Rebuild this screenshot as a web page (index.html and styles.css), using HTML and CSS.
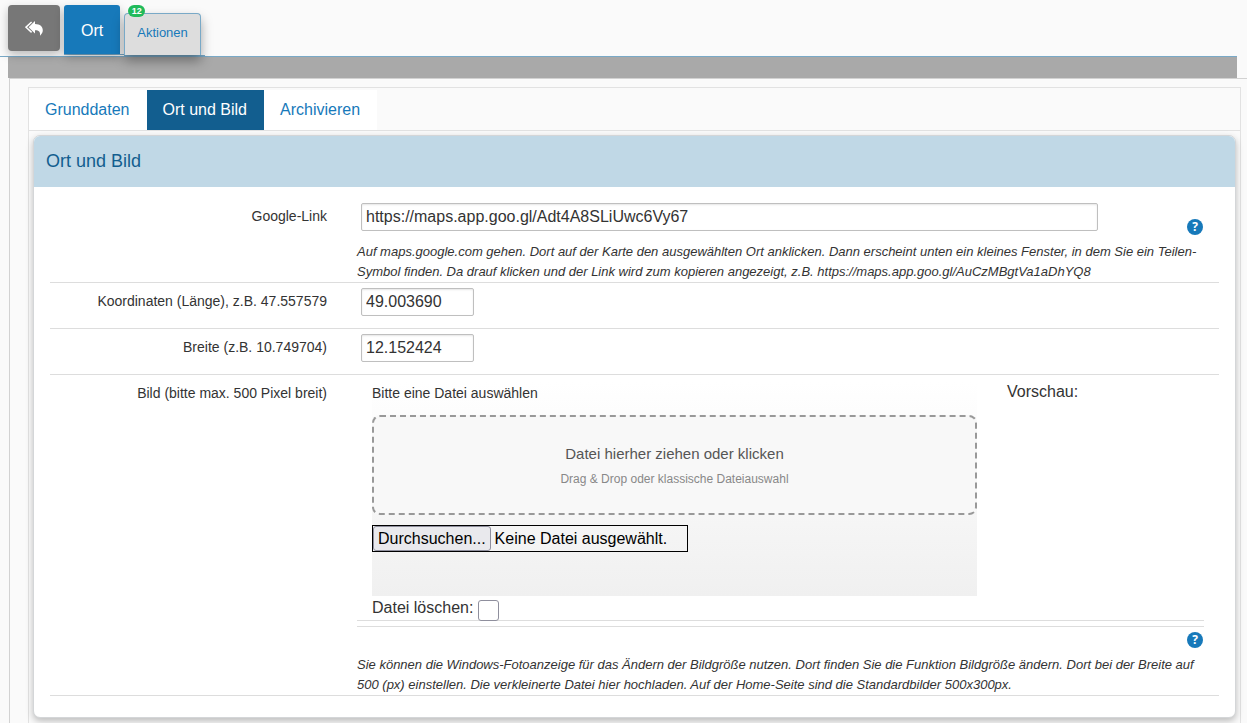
FILE: index.html
```html
<!DOCTYPE html>
<html lang="de">
<head>
<meta charset="utf-8">
<title>Ort und Bild</title>
<link rel="stylesheet" href="styles.css">
</head>
<body>
<nav class="topnav">
  <button type="button" class="back" aria-label="Zurück">
    <svg viewBox="0 0 18 15" width="18" height="15" aria-hidden="true">
      <path d="M6.600 1 1 6.200l5.600 5.200" fill="none" stroke="#fff" stroke-width="1.500"/>
      <path d="M10 0v3.100c5.200.1 7.800 2.600 7.800 6.200 0 2.400-1.300 4-2.800 5.400.5-3.900-.9-5.300-5-5.400v3.300L3.600 6.200z" fill="#fff"/>
    </svg>
  </button>
  <div class="topnav-item"><a class="main-tab" href="#ort">Ort</a></div>
  <div class="topnav-item topnav-item-actions"><a class="actions-tab" href="#aktionen">Aktionen<span class="badge">12</span></a></div>
</nav>
<div class="bar"></div>
<main class="page">
  <div class="tabbox">
    <nav class="tabs">
      <a class="tab" href="#grunddaten">Grunddaten</a>
      <a class="tab tab-active" href="#bild" aria-current="page">Ort und Bild</a>
      <a class="tab" href="#archivieren">Archivieren</a>
    </nav>
    <form class="card">
      <h1 class="card-title">Ort und Bild</h1>
      <div class="card-body">
        <div class="row row-link">
          <label class="label" for="link">Google-Link</label>
          <div class="field">
            <div class="link-line">
              <input class="text-input link-input" id="link" type="text" value="https://maps.app.goo.gl/Adt4A8SLiUwc6Vy67">
              <button type="button" class="help" aria-label="Hilfe">?</button>
            </div>
            <p class="hint">Auf maps.google.com gehen. Dort auf der Karte den ausgewählten Ort anklicken. Dann erscheint unten ein kleines Fenster, in dem Sie ein Teilen-Symbol finden. Da drauf klicken und der Link wird zum kopieren angezeigt, z.B. https://maps.app.goo.gl/AuCzMBgtVa1aDhYQ8</p>
          </div>
        </div>
        <div class="row row-short">
          <label class="label" for="lon">Koordinaten (Länge), z.B. 47.557579</label>
          <div class="field"><input class="text-input short-input" id="lon" type="text" value="49.003690"></div>
        </div>
        <div class="row row-short">
          <label class="label" for="lat">Breite (z.B. 10.749704)</label>
          <div class="field"><input class="text-input short-input" id="lat" type="text" value="12.152424"></div>
        </div>
        <div class="row">
          <label class="label label-image" for="file">Bild (bitte max. 500 Pixel breit)</label>
          <div class="field">
            <div class="upload-line">
              <div>
                <div class="upload">
                  <p class="upload-title">Bitte eine Datei auswählen</p>
                  <div class="dropzone">
                    <p class="drop-main">Datei hierher ziehen oder klicken</p>
                    <p class="drop-sub">Drag &amp; Drop oder klassische Dateiauswahl</p>
                  </div>
                  <div class="file">
                    <input class="file-native" id="file" type="file" tabindex="-1">
                    <button type="button" class="browse">Durchsuchen...</button>
                    <span>Keine Datei ausgewählt.</span>
                  </div>
                </div>
                <div class="delete">
                  <label for="delete">Datei löschen:</label>
                  <input class="check" id="delete" type="checkbox">
                </div>
              </div>
              <p class="preview">Vorschau:</p>
            </div>
            <div class="image-help"><button type="button" class="help" aria-label="Hilfe">?</button></div>
            <p class="hint">Sie können die Windows-Fotoanzeige für das Ändern der Bildgröße nutzen. Dort finden Sie die Funktion Bildgröße ändern. Dort bei der Breite auf 500 (px) einstellen. Die verkleinerte Datei hier hochladen. Auf der Home-Seite sind die Standardbilder 500x300px.</p>
          </div>
        </div>
      </div>
    </form>
  </div>
</main>
</body>
</html>
```
FILE: styles.css
```css
* { box-sizing: border-box; }

body {
  margin: 0;
  min-height: 100vh;
  display: flex;
  flex-direction: column;
  background: #fafafa;
  color: #333;
  font: 16px/20px "Liberation Sans", Arial, sans-serif;
}

p, h1 { margin: 0; font-weight: normal; }
a { text-decoration: none; }
button, input { font: inherit; }
button { cursor: pointer; }

/* Top navigation */
.topnav {
  position: relative;
  z-index: 1;
  display: flex;
  align-items: flex-start;
  height: 57px;
  margin-right: 10px;
  padding: 5px 0 0 8px;
  border-bottom: 1px solid #79a9c7;
}

.back {
  display: grid;
  place-items: center;
  width: 52px;
  height: 46px;
  margin-right: 4px;
  padding: 0;
  border: 0;
  border-radius: 4px;
  background: #777;
  box-shadow: 0 4px 10px rgba(0, 0, 0, .25);
}

.topnav-item {
  padding-right: 4px;
  border-bottom: 1px solid #79a9c7;
}

.topnav-item-actions { padding-top: 8px; }

.main-tab {
  display: block;
  padding: 16px 17px 13px;
  border-radius: 3px 3px 0 0;
  background: #1779ba;
  color: #fff;
  box-shadow: 0 4px 10px rgba(0, 0, 0, .25);
}

.actions-tab {
  position: relative;
  display: block;
  padding: 9px 12px 12px;
  border: 1px solid #79a9c7;
  border-bottom: 0;
  border-radius: 4px 4px 0 0;
  background: #ddd;
  color: #1779ba;
  font-size: 13px;
  box-shadow: 0 6px 12px rgba(0, 0, 0, .35);
}

.badge {
  position: absolute;
  top: -9px;
  left: 3px;
  width: 17px;
  border-radius: 6px;
  background: #21ba5b;
  color: #fff;
  font-size: 9px;
  font-weight: bold;
  line-height: 12px;
  text-align: center;
}

.bar {
  height: 21px;
  margin: 0 10px 0 8px;
  background: #a9a9a9;
}

/* Page frame */
.page {
  flex: 1;
  display: flex;
  margin-left: 9px;
  padding: 8px 6px 0 18px;
  border: solid #d2d2d2;
  border-width: 1px 0 0 1px;
}

.tabbox {
  flex: 1;
  min-width: 0;
  border: 1px solid #e2e2e2;
  border-bottom: 0;
}

.tabs {
  display: flex;
  padding-top: 2px;
  border-bottom: 1px solid #e2e2e2;
}

.tab {
  padding: 10px 17px 10px 16px;
  background: #fff;
  color: #1779ba;
}

.tab-active { background: #125e8f; color: #fff; }

/* Card */
.card {
  margin: 4px 4px 5px;
  overflow: hidden;
  border: 1px solid #d4d6d8;
  border-radius: 7px;
  background: #fff;
  box-shadow: 0 3px 7px rgba(0, 0, 0, .25);
}

.card-title {
  padding: 15px 12px 16px;
  background: #c0d8e6;
  color: #125e8f;
  font-size: 18px;
}

.card-body { padding: 0 16px 21px; }

.row {
  display: grid;
  grid-template-columns: minmax(0, 277fr) minmax(0, 847fr);
  column-gap: 30px;
  padding-right: 15px;
  border-bottom: 1px solid #ddd;
}

.row-link { padding-top: 16px; }
.row-short { padding-top: 5px; padding-bottom: 12px; }

.label {
  padding-top: 3px;
  font-size: 14px;
  text-align: right;
}

.label-image { padding-top: 8px; }

.text-input {
  display: block;
  height: 28px;
  margin-left: 4px;
  padding: 0 4px;
  border: 1px solid #bfbfbf;
  border-radius: 2px;
  background: #fff;
  color: #333;
  box-shadow: inset 0 1px 2px rgba(0, 0, 0, .1);
}

.link-input { width: 87%; }
.short-input { width: 113px; }

.link-line {
  display: flex;
  align-items: flex-start;
  justify-content: space-between;
}

.link-line .help { margin-top: 16px; }

.help {
  width: 16px;
  height: 16px;
  margin-right: 1px;
  padding: 0;
  border: 0;
  border-radius: 50%;
  background: #1779ba;
  color: #fff;
  font: bold 12px/16px "Open Sans", sans-serif;
}

.hint {
  font-size: 13px;
  font-style: italic;
}

.row-link .hint { padding-top: 7px; }

/* Upload */
.upload-line {
  display: grid;
  grid-template-columns: minmax(0, 605fr) minmax(0, 197fr);
  column-gap: 30px;
  padding: 7px 0 0 15px;
  border-bottom: 1px solid #ddd;
}

.upload {
  padding: 1px 0 44px;
  background: linear-gradient(#fff, #f0f0f0);
}

.upload-title { font-size: 14px; }

.dropzone {
  margin: 12px 0 10px;
  padding: 27px 12px 24px;
  border: 2px dashed #999;
  border-radius: 8px;
  background: #f8f8f8;
  text-align: center;
}

.drop-main {
  margin-bottom: 5px;
  color: #555;
  font-size: 15px;
}

.drop-sub { color: #888; font-size: 12px; }

.file {
  position: relative;
  display: flex;
  align-items: center;
  gap: 4px;
  width: 316px;
  border: 1px solid #000;
  color: #000;
}

.file-native {
  position: absolute;
  inset: 0;
  width: 100%;
  opacity: 0;
}

.browse {
  height: 25px;
  padding: 0 4px;
  border: 1px solid #8f8f9d;
  border-radius: 3px;
  background: #e9e9ed;
  color: #000;
}

.delete {
  display: flex;
  gap: 5px;
  padding-top: 2px;
  height: 24px;
}

.check {
  appearance: none;
  width: 21px;
  height: 21px;
  margin: 2px 0 0;
  border: 1px solid #8f8f9d;
  border-radius: 3px;
  background: #fff;
}

.image-help {
  display: flex;
  justify-content: flex-end;
  margin-top: 5px;
  padding: 5px 0 7px;
  border-top: 1px solid #ddd;
}
```
